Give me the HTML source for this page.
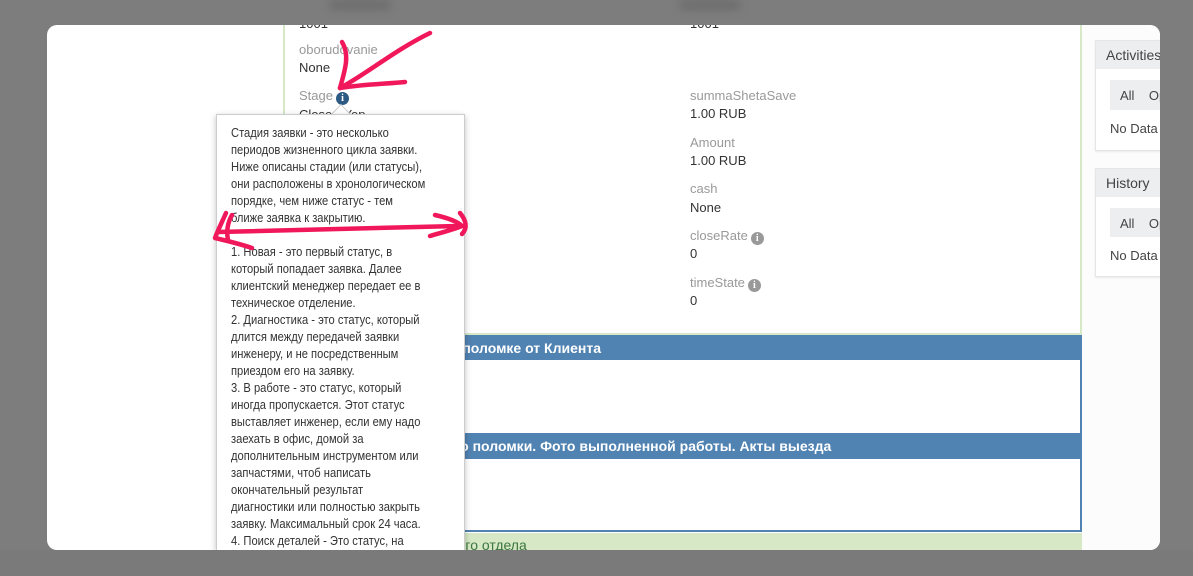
<!DOCTYPE html>
<html><head><meta charset="utf-8"><style>
*{margin:0;padding:0;box-sizing:border-box}
html,body{width:1193px;height:576px;overflow:hidden}
body{background:#7d7d7d;position:relative;font-family:"Liberation Sans","DejaVu Sans",sans-serif}
.a{position:absolute}
.modal{left:47px;top:25px;width:1113px;height:525px;background:#fff;border-radius:10px;overflow:hidden}
.lbl{font-size:13px;color:#999;white-space:nowrap}
.val{font-size:13px;color:#333;white-space:nowrap}
.ic{display:inline-block;width:13px;height:13px;border-radius:50%;background:#999;color:#fff;font:bold 10px/13px "Liberation Serif",serif;text-align:center;vertical-align:-1px;margin-left:3px}
.tip{left:216px;top:114px;width:249px;height:436px;background:#fff;border:1px solid #ccc;border-bottom:none;box-shadow:0 2px 6px rgba(0,0,0,.25);overflow:hidden}
.tt{position:absolute;left:14px;top:9px;font-size:13.3px;line-height:17px;color:#333;white-space:nowrap;transform:scaleX(.84);transform-origin:left top}
.bar{background:#5082b2;color:#fff;font-size:14px;font-weight:bold;white-space:nowrap}
.panel{border:1px solid #e4e6e8;background:#fff;box-shadow:0 1px 2px rgba(0,0,0,.08)}
.ph{background:#eceeef;font-size:14px;color:#444;padding:6px 10px;white-space:nowrap}
.tabs{background:#eceeef;font-size:13px;color:#444;white-space:nowrap}
</style></head><body>
<div class="a" style="left:330px;top:0;width:60px;height:10px;background:#6e6e6e;filter:blur(4px)"></div>
<div class="a" style="left:680px;top:0;width:60px;height:10px;background:#6e6e6e;filter:blur(4px)"></div>
<div class="a modal">
 <div class="a" style="left:1035px;top:0;width:78px;height:525px;background:#fcfcfc"></div>
 <div class="a" style="left:236px;top:-10px;width:799px;height:320px;border-left:2px solid #d6e8c6;border-right:2px solid #d6e8c6;border-bottom:2px solid #d6e8c6"></div>
 <div class="a val" style="left:252px;top:-9px">1001</div>
 <div class="a val" style="left:643px;top:-9px">1001</div>
 <div class="a lbl" style="left:252px;top:17px">oborudovanie</div>
 <div class="a val" style="left:252px;top:35px">None</div>
 <div class="a lbl" style="left:252px;top:63px">Stage<span class="ic" style="background:#2d5a83">i</span></div>
 <div class="a val" style="left:252px;top:82px">Close - Yep</div>
 <div class="a lbl" style="left:643px;top:63px">summaShetaSave</div>
 <div class="a val" style="left:643px;top:81px">1.00 RUB</div>
 <div class="a lbl" style="left:643px;top:110px">Amount</div>
 <div class="a val" style="left:643px;top:128px">1.00 RUB</div>
 <div class="a lbl" style="left:643px;top:156px">cash</div>
 <div class="a val" style="left:643px;top:175px">None</div>
 <div class="a lbl" style="left:643px;top:203px">closeRate<span class="ic">i</span></div>
 <div class="a val" style="left:643px;top:221px">0</div>
 <div class="a lbl" style="left:643px;top:250px">timeState<span class="ic">i</span></div>
 <div class="a val" style="left:643px;top:268px">0</div>
 <div class="a" style="left:236px;top:310px;width:799px;height:197px;border:2px solid #5082b2"></div>
 <div class="a bar" style="left:236px;top:310px;width:799px;height:25px;padding:5px 0 0 86px">Описание по поломке от Клиента</div>
 <div class="a bar" style="left:236px;top:408px;width:799px;height:26px;padding:5px 0 0 129px">Фото до поломки. Фото выполненной работы. Акты выезда</div>
 <div class="a" style="left:236px;top:508px;width:799px;height:20px;background:#d6e8c6;color:#3c763d;font-size:14px;padding:4px 0 0 74px;white-space:nowrap">Акты технического отдела</div>
 <div class="a panel" style="left:1048px;top:15px;width:120px;height:111px">
  <div class="ph">Activities</div>
  <div class="a tabs" style="left:14px;top:39px;width:110px;height:30px;padding:8px 10px">All &nbsp;&nbsp;&nbsp;Open</div>
  <div class="a val" style="left:14px;top:80px;color:#444">No Data</div>
 </div>
 <div class="a panel" style="left:1048px;top:143px;width:120px;height:109px">
  <div class="ph">History</div>
  <div class="a tabs" style="left:14px;top:39px;width:110px;height:29px;padding:8px 10px">All &nbsp;&nbsp;&nbsp;Open</div>
  <div class="a val" style="left:14px;top:79px;color:#444">No Data</div>
 </div>
</div>
<div class="a" style="left:1160px;top:25px;width:33px;height:525px;background:#7d7d7d"></div>
<div class="a" style="left:334px;top:107px;width:14px;height:14px;background:#fff;border-left:1px solid #ccc;border-top:1px solid #ccc;transform:rotate(45deg)"></div>
<div class="a tip">
<div class="tt">Стадия заявки - это несколько<br>периодов жизненного цикла заявки.<br>Ниже описаны стадии (или статусы),<br>они расположены в хронологическом<br>порядке, чем ниже статус - тем<br>ближе заявка к закрытию.<br><br>1. Новая - это первый статус, в<br>который попадает заявка. Далее<br>клиентский менеджер передает ее в<br>техническое отделение.<br>2. Диагностика - это статус, который<br>длится между передачей заявки<br>инженеру, и не посредственным<br>приездом его на заявку.<br>3. В работе - это статус, который<br>иногда пропускается. Этот статус<br>выставляет инженер, если ему надо<br>заехать в офис, домой за<br>дополнительным инструментом или<br>запчастями, чтоб написать<br>окончательный результат<br>диагностики или полностью закрыть<br>заявку. Максимальный срок 24 часа.<br>4. Поиск деталей - Это статус, на</div>
</div>
<div class="a" style="left:0;top:550px;width:1193px;height:26px;background:#7a7a7a"></div>
<svg class="a" style="left:0;top:0" width="1193" height="576" fill="none" stroke="#f0185a" stroke-width="4.5" stroke-linecap="round" stroke-linejoin="round">
<path d="M430 33 C395 50 365 75 340 88"/>
<path d="M340 88 C345 70 350 55 342 42"/>
<path d="M340 88 C365 84 385 84 405 82"/>
<path d="M218 232 C300 230 380 228 458 226"/>
<path d="M226 213 C222 222 218 230 215 238 C228 241 240 244 252 248"/>
<path d="M232 215 C228 222 226 230 228 240"/>
<path d="M435 215 C448 218 458 222 462 226 C452 230 440 233 430 236"/>
<path d="M460 213 C466 220 468 228 462 234"/>
</svg>
</body></html>
